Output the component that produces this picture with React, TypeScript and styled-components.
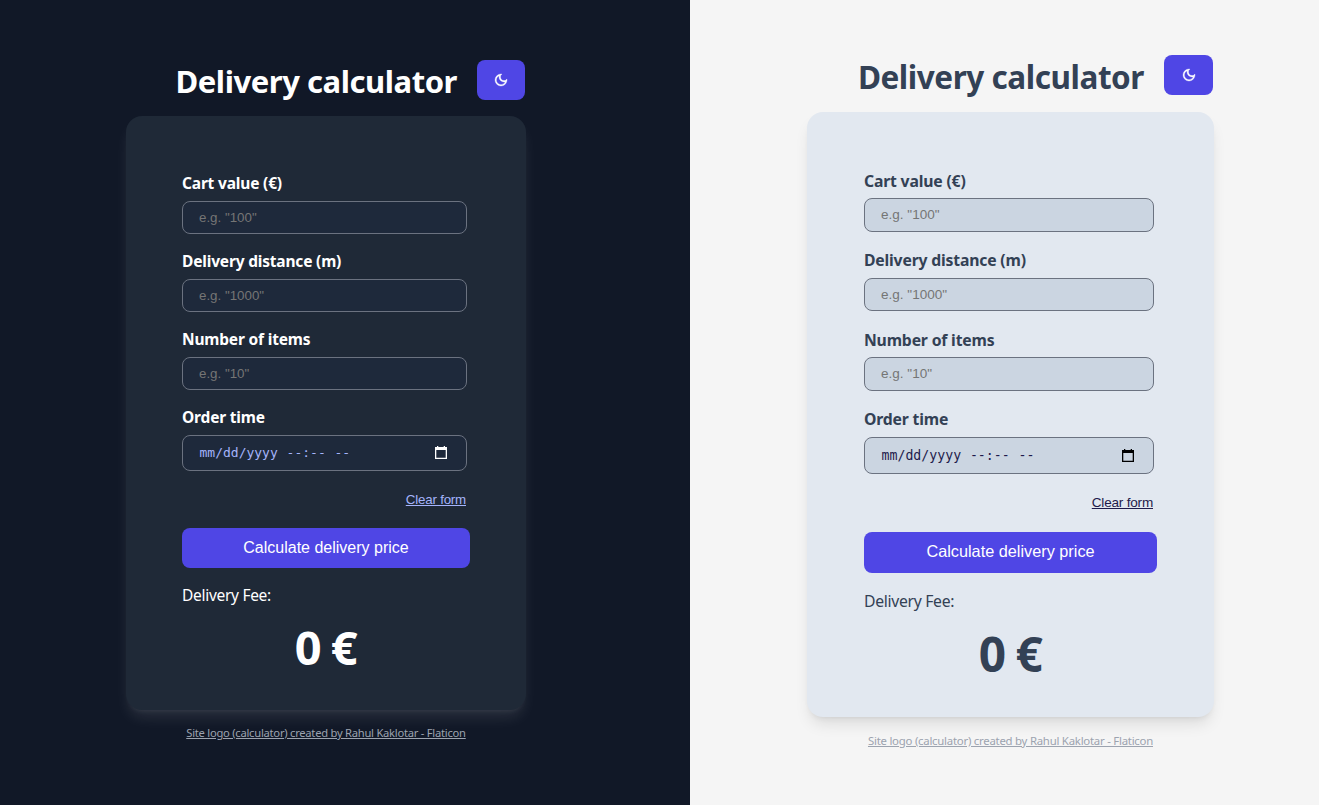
import React from 'react';
import styled, { createGlobalStyle, ThemeProvider, DefaultTheme } from 'styled-components';
import { MdOutlineDarkMode } from 'react-icons/md';

const GlobalStyle = createGlobalStyle`
  *, *::before, *::after { box-sizing: border-box; }
  body { margin: 0; background: #f5f5f5; }
`;

const dark = {
  grow: '0 0 690px',
  bg: '#111827', card: '#1f2937', input: '#1e293b', text: '#ffffff', accent: '#a5b4fc',
  footer: '#9ca3af', icon: '#ffffff', placeholder: '#757575',
  shadow: '0 10px 15px -3px rgba(255,255,255,0.1), 0 4px 6px -4px rgba(255,255,255,0.1)',
  padTop: 60, padLeft: 126, width: 400, headerGap: 16, toggleW: 48,
  titleSize: 31, titleSpacing: -0.45, titleShift: 2.4, cardH: 594, cardTop: 55, side: 56, inner: 285,
  labelSpacing: -0.18, labelGap: 6, fieldH: 33, fieldGap: 15, dateH: 36, dateShift: 0,
  clearTop: 20, clearGap: 20, buttonW: 288, buttonH: 40, buttonPad: 1, feeTop: 15,
  feeSpacing: -0.29, amountTop: 8, footTop: 14, footSpacing: -0.25, scale: 1,
};

const light = {
  grow: '1 1 0',
  bg: '#f5f5f5', card: '#e2e8f0', input: '#cbd5e1', text: '#334155', accent: '#1e1b4b',
  footer: '#9ca3af', icon: '#000000', placeholder: '#757575',
  shadow: '0 10px 15px -3px rgba(0,0,0,0.1), 0 4px 6px -4px rgba(0,0,0,0.1)',
  padTop: 55, padLeft: 117, width: 407, headerGap: 17, toggleW: 49,
  titleSize: 31.5, titleSpacing: -0.45, titleShift: 3, cardH: 605, cardTop: 57, side: 57, inner: 290,
  labelSpacing: -0.18, labelGap: 5.2, fieldH: 33.6, fieldGap: 16.7, dateH: 37, dateShift: 2,
  clearTop: 20.5, clearGap: 21.1, buttonW: 293, buttonH: 41, buttonPad: 2, feeTop: 16,
  feeSpacing: -0.31, amountTop: 9, footTop: 15, footSpacing: -0.24, scale: 1.017,
};

type Metrics = typeof dark;
type T = { theme: DefaultTheme };
const m = (p: T) => p.theme as unknown as Metrics;

const Page = styled.div`
  display: flex;
  width: 100%;
  height: 805px;
  overflow: hidden;
`;

const Panel = styled.main`
  flex: ${p => m(p).grow};
  padding: ${p => m(p).padTop}px 0 0 ${p => m(p).padLeft}px;
  background: ${p => m(p).bg};
  color: ${p => m(p).text};
  font-family: 'Noto Sans', sans-serif;
`;

const Header = styled.header`
  display: flex;
  justify-content: flex-end;
  width: ${p => m(p).width}px;
  height: 40px;
  padding-right: 1px;
  gap: 20px;
`;

const Title = styled.h1`
  margin: 0;
  padding-top: ${p => m(p).titleShift}px;
  font-size: ${p => m(p).titleSize}px;
  line-height: 38px;
  font-weight: 700;
  letter-spacing: ${p => m(p).titleSpacing}px;
  white-space: nowrap;
`;

const Toggle = styled.button`
  display: flex;
  align-items: center;
  justify-content: center;
  flex: none;
  width: ${p => m(p).toggleW}px;
  height: 40px;
  padding: 0;
  border: 0;
  border-radius: 8px;
  background: #4f46e5;
  color: #fff;
  font-size: 16px;
  path:last-child:not([fill='none']) { stroke-width: 0.5; }
`;

const Card = styled.form`
  width: ${p => m(p).width}px;
  height: ${p => m(p).cardH}px;
  margin-top: ${p => m(p).headerGap}px;
  padding: ${p => m(p).cardTop}px ${p => m(p).side}px 0;
  border-radius: 16px;
  background: ${p => m(p).card};
  box-shadow: ${p => m(p).shadow};
`;

const Fields = styled.div`
  display: flex;
  flex-direction: column;
  gap: ${p => m(p).fieldGap}px;
  width: ${p => m(p).inner}px;
`;

const Field = styled.div`
  display: flex;
  flex-direction: column;
`;

const Label = styled.label`
  height: 24px;
  margin-bottom: ${p => m(p).labelGap}px;
  font-size: ${p => 15.5 * m(p).scale}px;
  line-height: 24px;
  font-weight: 700;
  letter-spacing: ${p => m(p).labelSpacing}px;
  white-space: nowrap;
`;

const Input = styled.input`
  width: 100%;
  height: ${p => m(p).fieldH}px;
  padding: 0 16px;
  border: 1px solid #6b7280;
  border-radius: 8px;
  outline: 0;
  background: ${p => m(p).input};
  color: ${p => m(p).accent};
  font-family: 'Liberation Sans', Arial, sans-serif;
  font-size: ${p => 13.333 * m(p).scale}px;
  &::placeholder { color: ${p => m(p).placeholder}; }
`;

const DateBox = styled.div`
  display: flex;
  align-items: center;
  height: ${p => m(p).dateH}px;
  padding: ${p => m(p).dateShift}px 19px 0 16.5px;
  border: 1px solid #6b7280;
  border-radius: 8px;
  background: ${p => m(p).input};
  color: ${p => m(p).accent};
  font-family: 'DejaVu Sans Mono', monospace;
  font-size: ${p => 13 * m(p).scale}px;
  gap: 8.8px;
  line-height: 16px;
`;

const Calendar = styled.svg`
  width: 12px;
  height: 13px;
  margin: 0 0 2px auto;
  fill: ${p => m(p).icon};
`;

const ClearRow = styled.div`
  display: flex;
  justify-content: flex-end;
  width: ${p => m(p).inner - 1}px;
  margin: ${p => m(p).clearTop}px 0 ${p => m(p).clearGap}px;
`;

const Clear = styled.button`
  height: 17px;
  padding: 0;
  border: 0;
  background: none;
  color: ${p => m(p).accent};
  font-family: 'Liberation Sans', Arial, sans-serif;
  font-size: ${p => 13.333 * m(p).scale}px;
  line-height: 17px;
  letter-spacing: -0.2px;
  text-decoration: underline;
`;

const Submit = styled.button`
  display: block;
  width: ${p => m(p).buttonW}px;
  height: ${p => m(p).buttonH}px;
  padding: 0 0 ${p => m(p).buttonPad}px;
  border: 0;
  border-radius: 8px;
  background: #4f46e5;
  color: #fff;
  font-family: 'Liberation Sans', Arial, sans-serif;
  font-size: ${p => 16 * m(p).scale}px;
`;

const FeeLabel = styled.p`
  height: 24px;
  margin: ${p => m(p).feeTop}px 0 0;
  font-size: ${p => 15.5 * m(p).scale}px;
  line-height: 24px;
  letter-spacing: ${p => m(p).feeSpacing}px;
`;

const Amount = styled.p`
  margin: ${p => m(p).amountTop}px 0 0;
  padding-right: 1px;
  text-align: center;
  font-size: ${p => 47 * m(p).scale}px;
  line-height: 64px;
  font-weight: 700;
  letter-spacing: -1.5px;
`;

const Footer = styled.footer`
  width: ${p => m(p).width}px;
  margin-top: ${p => m(p).footTop}px;
  text-align: center;
  color: ${p => m(p).footer};
  font-size: ${p => 11.2 * m(p).scale}px;
  line-height: 18px;
  letter-spacing: ${p => m(p).footSpacing}px;
  text-decoration: underline;
  white-space: nowrap;
`;

const fields = [
  { label: 'Cart value (€)', hint: 'e.g. "100"' },
  { label: 'Delivery distance (m)', hint: 'e.g. "1000"' },
  { label: 'Number of items', hint: 'e.g. "10"' },
];

function Calculator() {
  return (
    <Panel>
      <Header>
        <Title>Delivery calculator</Title>
        <Toggle type="button" aria-label="Toggle theme"><MdOutlineDarkMode /></Toggle>
      </Header>
      <Card>
        <Fields>
          {fields.map(f => (
            <Field key={f.label}>
              <Label>{f.label}</Label>
              <Input placeholder={f.hint} />
            </Field>
          ))}
          <Field>
            <Label>Order time</Label>
            <DateBox>
              <span>mm/dd/yyyy</span>
              <span>--:--</span>
              <span>--</span>
              <Calendar viewBox="0 0 12 13">
                <path d="M0 1h2V0h1.3v1h5.4V0H10v1h2v12H0zM1.3 4v7.7h9.4V4z" fillRule="evenodd" />
              </Calendar>
            </DateBox>
          </Field>
        </Fields>
        <ClearRow><Clear type="button">Clear form</Clear></ClearRow>
        <Submit type="button">Calculate delivery price</Submit>
        <FeeLabel>Delivery Fee:</FeeLabel>
        <Amount>0 €</Amount>
      </Card>
      <Footer>Site logo (calculator) created by Rahul Kaklotar - Flaticon</Footer>
    </Panel>
  );
}

export default function App() {
  return (
    <Page>
      <GlobalStyle />
      <ThemeProvider theme={dark as unknown as DefaultTheme}><Calculator /></ThemeProvider>
      <ThemeProvider theme={light as unknown as DefaultTheme}><Calculator /></ThemeProvider>
    </Page>
  );
}
